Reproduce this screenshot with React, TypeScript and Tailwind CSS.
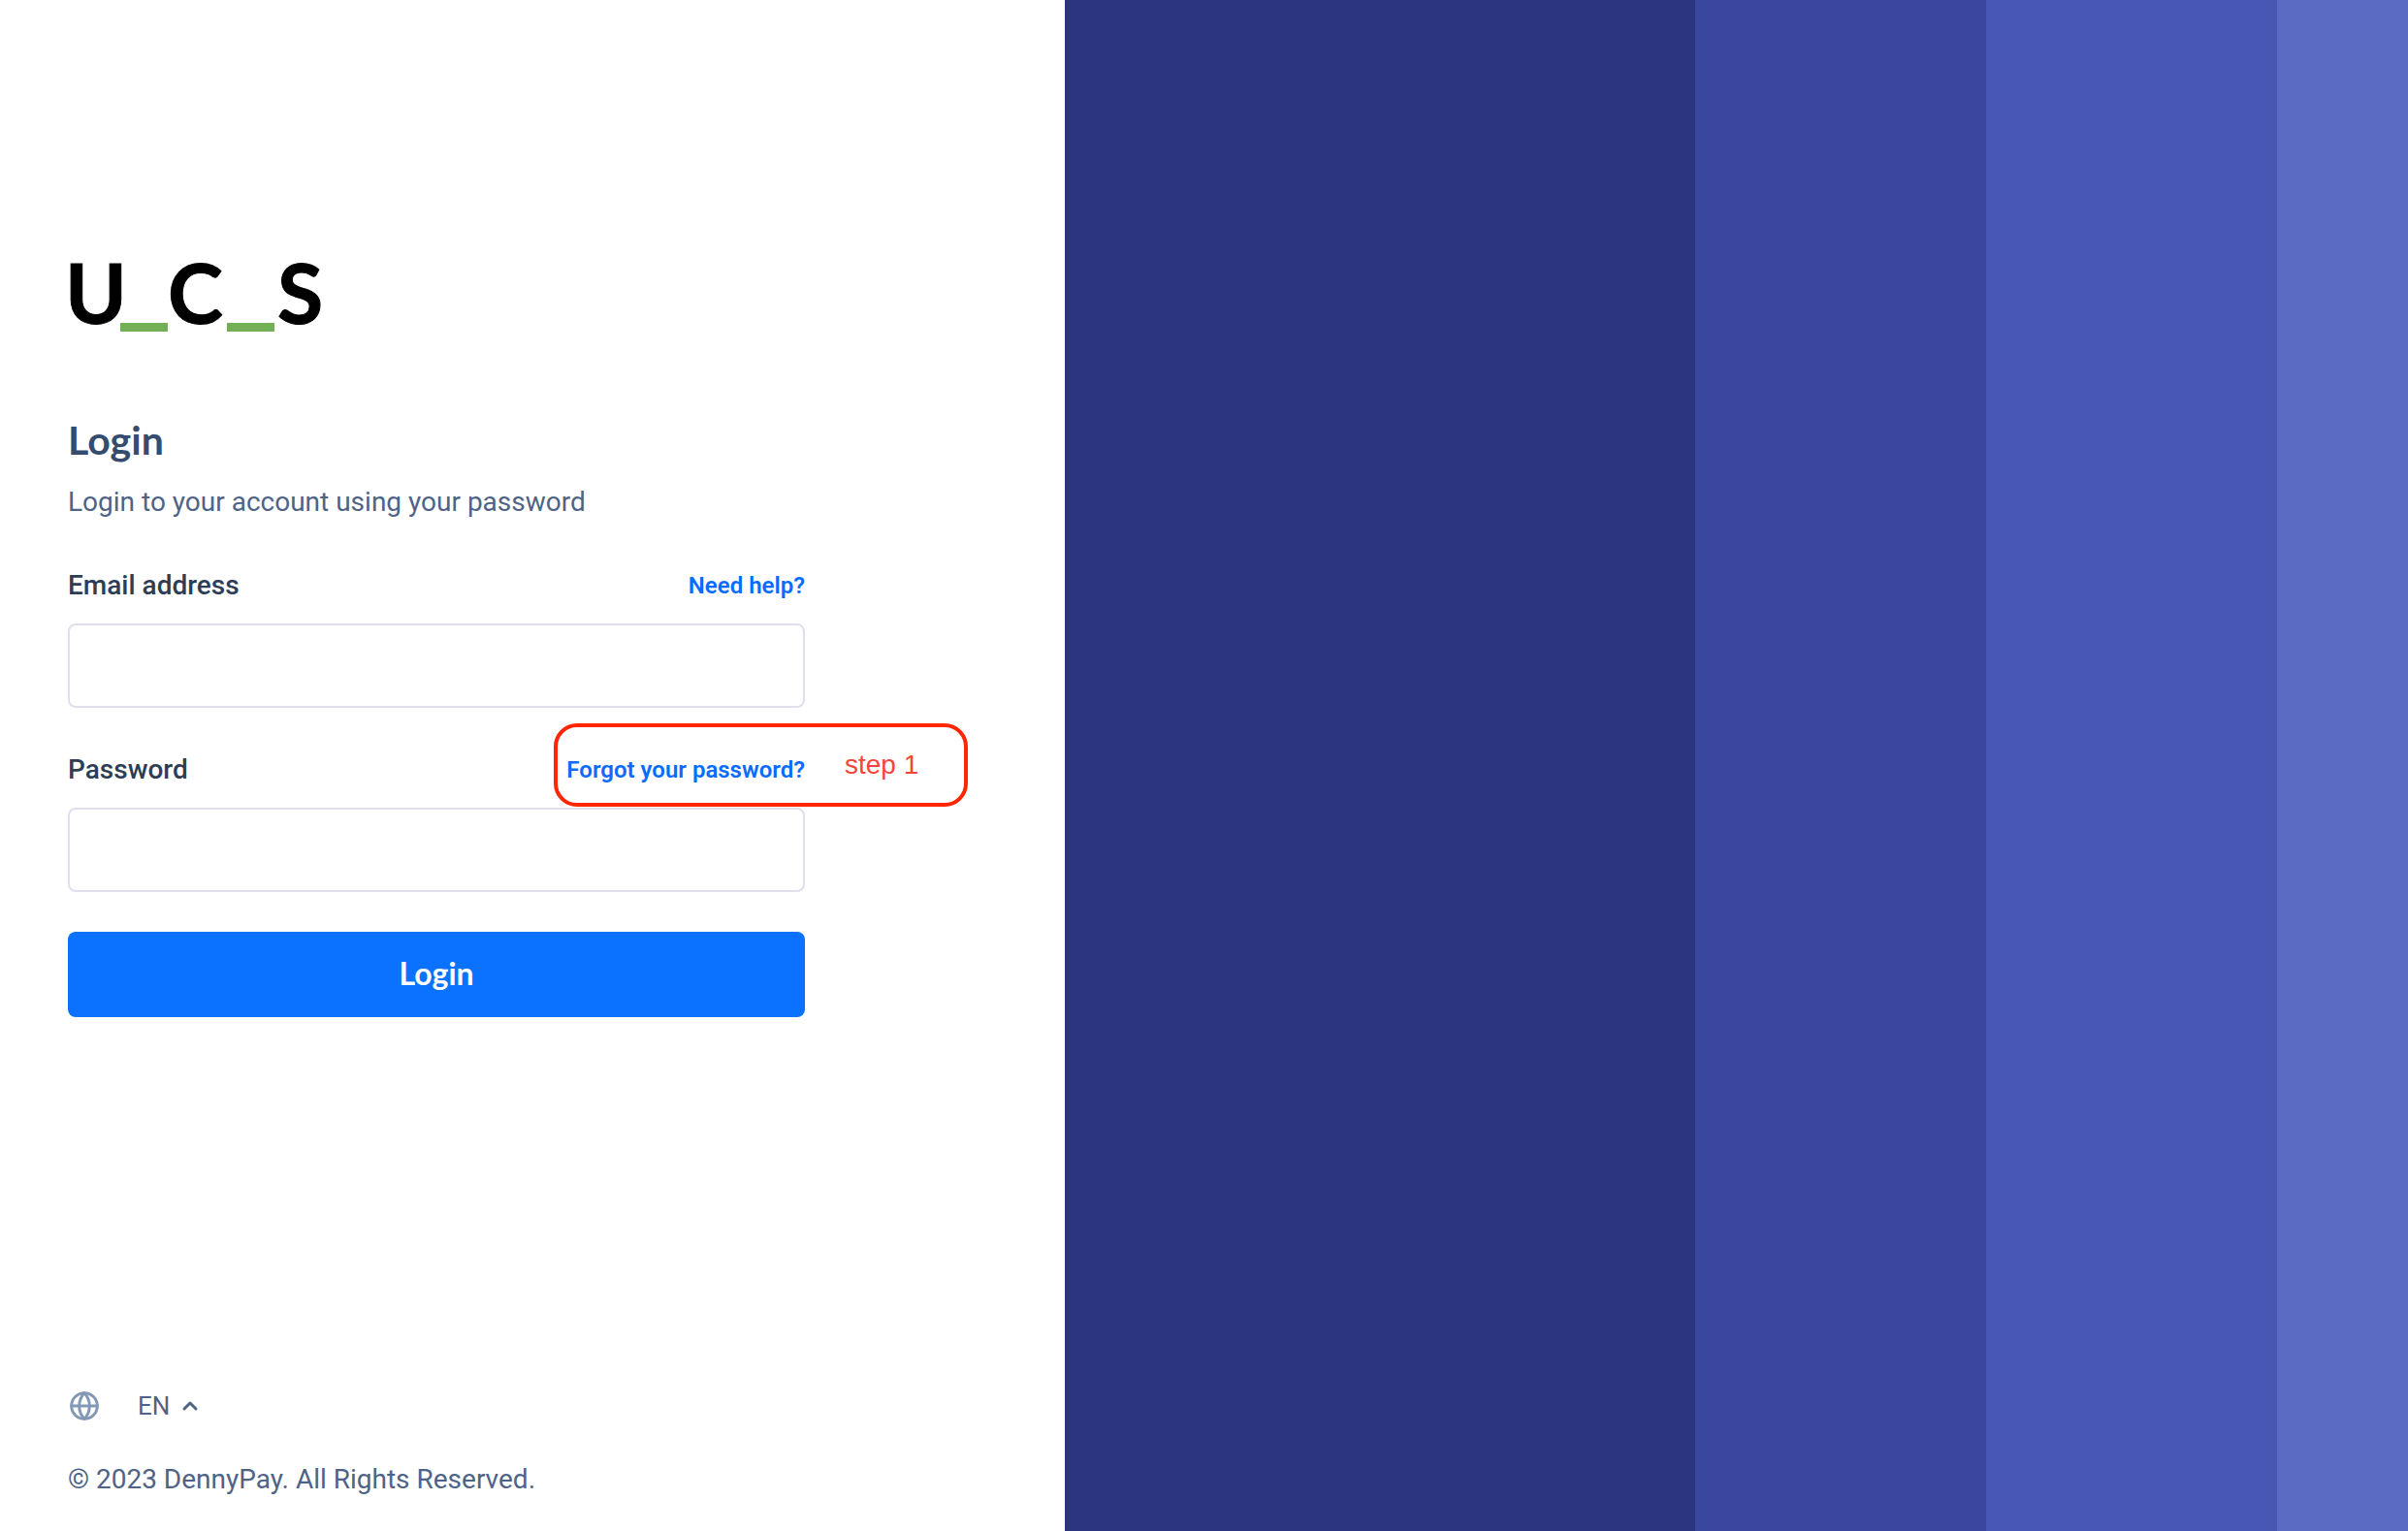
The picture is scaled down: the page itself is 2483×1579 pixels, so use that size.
import { ChevronUp, Globe } from 'lucide-react';

function Field({ label, link, children }: { label: string; link: string; children?: React.ReactNode }) {
  return (
    <div>
      <div className="relative flex h-[32px] items-center justify-between">
        <label className="text-[28px] font-medium leading-[32px] text-[#2e3d56]">{label}</label>
        <a className="text-[24px] font-semibold leading-[32px] text-[#0a6cff]">{link}</a>
        {children}
      </div>
      <input className="mt-[23px] block h-[87px] w-full rounded-[8px] border-2 border-[#dfe0ec] bg-white" />
    </div>
  );
}

export default function App() {
  return (
    <div className="flex h-[1579px] w-full bg-white font-['Roboto',sans-serif]">
      <div className="flex w-[1098px] shrink-0 flex-col pb-[35px] pl-[70px] pt-[255px]">
        {/* Logo */}
        <div className="flex h-[87px] items-start font-['Lato',sans-serif] text-[86px] font-bold leading-[92px] text-black [-webkit-text-stroke:1px_black]">
          <span className="-ml-[3px] w-[57px]">U</span>
          <span className="mt-[78px] h-[9px] w-[49px] bg-[#73af55]"></span>
          <span className="w-[61px]">C</span>
          <span className="mt-[78px] h-[9px] w-[49px] bg-[#73af55]"></span>
          <span className="ml-[3px]">S</span>
        </div>

        <h1 className="mt-[88px] font-['Lato',sans-serif] text-[41px] font-bold leading-[48px] text-[#364c6e]">Login</h1>
        <p className="mt-[22px] text-[28px] leading-[36px] text-[#4f6386]">Login to your account using your password</p>

        <div className="mt-[52px] w-[760px]">
          <Field label="Email address" link="Need help?" />
          <div className="mt-[48px]">
            <Field label="Password" link="Forgot your password?">
              {/* step annotation */}
              <div className="absolute left-[501px] top-[-32px] h-[86px] w-[427px] rounded-[24px] border-4 border-[#ff2600]">
                <span className="absolute left-[296px] top-[22px] font-['Liberation_Sans',sans-serif] text-[28px] leading-[34px] text-[#f4453a]">
                  step 1
                </span>
              </div>
            </Field>
          </div>
          <button className="mt-[41px] h-[88px] w-full rounded-[8px] bg-[#0a72ff] pb-[2px] font-['Lato',sans-serif] text-[32px] font-bold text-white">
            Login
          </button>
        </div>

        <div className="mt-auto flex items-center pl-[1px] text-[#4f6386]">
          <Globe className="h-[32px] w-[32px] text-[#8398b5]" strokeWidth={2.2} />
          <span className="ml-[39px] text-[26px] leading-[32px]">EN</span>
          <ChevronUp className="ml-[9px] h-[24px] w-[24px]" strokeWidth={3} />
        </div>
        <p className="mt-[42px] text-[28px] leading-[36px] text-[#4f6386]">© 2023 DennyPay. All Rights Reserved.</p>
      </div>

      {/* Stripes */}
      <div className="flex flex-1">
        <div className="w-[650px] bg-[#2c3680]"></div>
        <div className="w-[300px] bg-[#39479e]"></div>
        <div className="w-[300px] bg-[#4757b3]"></div>
        <div className="flex-1 bg-[#5b6ac2]"></div>
      </div>
    </div>
  );
}
